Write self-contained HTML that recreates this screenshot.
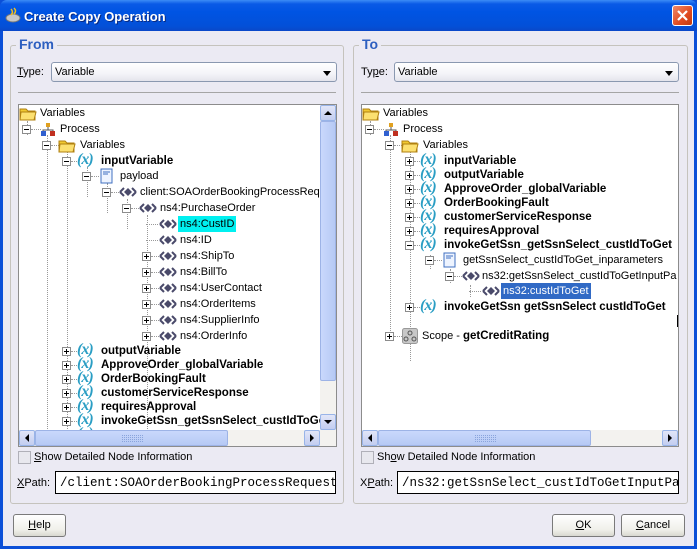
<!DOCTYPE html>
<html><head><meta charset="utf-8"><style>
*{margin:0;padding:0;box-sizing:border-box}
body{width:697px;height:549px;overflow:hidden;background:#0b4fd8;font-family:"Liberation Sans",sans-serif;font-size:11px;position:relative}
.a{position:absolute}
#title{left:0;top:0;width:697px;height:31px;background:linear-gradient(#3c8cf6 0,#0a5ae6 4px,#0054e3 12px,#0350d8 26px,#0a48c8 31px);border-radius:7px 7px 0 0}
#title span{position:absolute;left:24px;top:9px;color:#fff;font:bold 13px "Liberation Sans",sans-serif;text-shadow:1px 1px #0a2a80}
#close{left:672px;top:5px;width:21px;height:21px;background:linear-gradient(135deg,#f08a6a,#e04a20 60%,#c03a10);border:1px solid #fff;border-radius:3px}
#body{left:3px;top:31px;width:691px;height:515px;background:#ebeaf3}
.fs{border:1px solid #c5c3bd;border-radius:3px}
.lg{background:#ebeaf3;color:#2d5fc0;font-size:14px;font-weight:bold;padding:0 3px}
.combo{height:20px;border:1px solid #8a98b0;border-radius:3px;background:linear-gradient(#fff,#f4f4f8 60%,#e4e4ec);font-size:11px;padding:3px 0 0 3px}
.combo:after{content:"";position:absolute;right:5px;top:8px;border:4px solid transparent;border-top:5px solid #000;border-bottom:0}
.sep{height:1px;background:#a5a5a5}
.tree{background:#fff;border:1px solid #8c8c8c;overflow:hidden}
.clip{position:absolute;left:0;top:0;overflow:hidden;height:326px}
.r{position:absolute;height:16px;white-space:nowrap;font-size:11px;line-height:16px;color:#000}
.b{font-weight:bold;font-size:11.5px}
.ex{position:absolute;width:9px;height:9px;border:1px solid #8c8c8c;background:#fff;top:4px}
.ex:before{content:"";position:absolute;left:1px;top:3px;width:5px;height:1px;background:#000}
.p:after{content:"";position:absolute;left:3px;top:1px;width:1px;height:5px;background:#000}
.dl{position:absolute;top:8px;height:1px;border-top:1px dotted #999}
.vl{position:absolute;width:1px;border-left:1px dotted #999}
.x{position:absolute;color:#2a9ec4;font:italic bold 16px "Liberation Serif",serif;top:-2px;letter-spacing:-1px;line-height:18px}
.t{position:absolute}
.sb{background:#f3f2ef}
.btn{background:linear-gradient(#e2e6f8,#c2cdf0);border:1px solid #98b4e8;border-radius:2px}
.thumb{background:linear-gradient(90deg,#c9d8fc,#b6c9f4);border:1px solid #9db3e6;border-radius:2px}
.thumbh{background:linear-gradient(#c9d8fc,#b6c9f4);border:1px solid #9db3e6;border-radius:2px}
.chk{width:13px;height:13px;border:1px solid #b0b0b8;background:#e8e8ee}
.field{height:23px;border:1px solid #000;background:#fff;font:12.5px "Liberation Mono",monospace;padding:4px 0 0 4px;white-space:nowrap;overflow:hidden}
.pb{height:23px;border:1px solid #7a7a7a;border-radius:3px;background:linear-gradient(#fff,#f0f0ea 70%,#d8d8d0);text-align:center;line-height:21px;font-size:11px}
u{text-decoration:underline}
</style></head><body>
<div id="title" class="a"><svg class="a" style="left:5px;top:7px" width="16" height="16"><ellipse cx="8" cy="11" rx="7" ry="4" fill="#c8c8c8" stroke="#777"/><path d="M6 2 q3 3 0 6 M9 1 q3 3 0 6" stroke="#f0c020" fill="none" stroke-width="1.5"/></svg><span>Create Copy Operation</span></div>
<div id="close" class="a"><svg width="19" height="19"><path d="M5 5 L14 14 M14 5 L5 14" stroke="#fff" stroke-width="2.2"/></svg></div>
<div id="body" class="a"></div>

<!-- FROM -->
<div class="a fs" style="left:10px;top:45px;width:334px;height:459px"></div>
<div class="a lg" style="left:16px;top:36px">From</div>
<div class="a" style="left:17px;top:66px"><u>T</u>ype:</div>
<div class="a combo" style="left:51px;top:62px;width:286px">Variable</div>
<div class="a sep" style="left:18px;top:92px;width:318px"></div>
<div class="a tree" style="left:18px;top:104px;width:319px;height:343px">
 <div class="clip" style="width:302px">
  <div class="vl" style="left:8px;top:16px;height:14px"></div>
  <div class="vl" style="left:28px;top:30px;height:320px"></div>
  <div class="vl" style="left:48px;top:46px;height:290px"></div>
  <div class="vl" style="left:68px;top:62px;height:30px"></div>
  <div class="vl" style="left:88px;top:78px;height:30px"></div>
  <div class="vl" style="left:108px;top:94px;height:30px"></div>
  <div class="vl" style="left:128px;top:110px;height:226px"></div>
 </div>
</div>
<div class="a" style="left:18px;top:105px;width:302px;height:325px;overflow:hidden" id="lt">
 <svg class="a" style="left:1px;top:0" width="18" height="16"><path d="M1 4h6l2 2h7v9H1z" fill="#f0c830" stroke="#b08010"/><path d="M2 7h15l-2 8H1z" fill="#fce070" stroke="#b08010"/></svg>
 <div class="r" style="left:22px;top:0">Variables</div>

 <div class="r" style="left:4px;top:16px;width:200px"><span class="ex"></span><span class="dl" style="left:9px;width:10px"></span><svg class="a" style="left:18px;top:1px" width="16" height="15"><rect x="6" y="1" width="4" height="4" fill="#e0a020"/><rect x="1" y="9" width="5" height="5" fill="#3060d0"/><rect x="10" y="9" width="5" height="5" fill="#c03020"/><path d="M8 5v3M3 9V8h10v1" stroke="#555" fill="none"/></svg><span class="t" style="left:38px">Process</span></div>
 <div class="r" style="left:24px;top:32px;width:200px"><span class="ex"></span><span class="dl" style="left:9px;width:8px"></span><svg class="a" style="left:16px;top:0" width="18" height="16"><path d="M1 4h6l2 2h7v9H1z" fill="#f0c830" stroke="#b08010"/><path d="M2 7h15l-2 8H1z" fill="#fce070" stroke="#b08010"/></svg><span class="t" style="left:38px">Variables</span></div>
 <div class="r" style="left:44px;top:48px;width:260px"><span class="ex"></span><span class="dl" style="left:9px;width:8px"></span><span class="x" style="left:15px">(x)</span><span class="t b" style="left:39px">inputVariable</span></div>
 <div class="r" style="left:64px;top:63px;width:260px"><span class="ex"></span><span class="dl" style="left:9px;width:8px"></span><svg class="a" style="left:18px;top:0" width="14" height="16"><rect x="1" y="1" width="11" height="14" fill="#eef4ff" stroke="#4070c0"/><path d="M3 4h7M3 6h5" stroke="#4070c0"/></svg><span class="t" style="left:38px">payload</span></div>
 <div class="r" style="left:84px;top:79px;width:300px"><span class="ex"></span><span class="dl" style="left:9px;width:8px"></span><svg class="a" style="left:17px;top:2px" width="18" height="12"><path d="M1 6l4-4M1 6l4 4M17 6l-4-4M17 6l-4 4" stroke="#4a4a6a" stroke-width="2" fill="none"/><path d="M9 2l4 4-4 4-4-4z" fill="#4a4a6a"/></svg><span class="t" style="left:38px">client:SOAOrderBookingProcessRequest</span></div>
 <div class="r" style="left:104px;top:95px;width:300px"><span class="ex"></span><span class="dl" style="left:9px;width:8px"></span><svg class="a" style="left:17px;top:2px" width="18" height="12"><path d="M1 6l4-4M1 6l4 4M17 6l-4-4M17 6l-4 4" stroke="#4a4a6a" stroke-width="2" fill="none"/><path d="M9 2l4 4-4 4-4-4z" fill="#4a4a6a"/></svg><span class="t" style="left:38px">ns4:PurchaseOrder</span></div>
 <div class="r" style="left:124px;top:111px;width:200px"><span class="dl" style="left:4px;width:12px"></span><svg class="a" style="left:17px;top:2px" width="18" height="12"><path d="M1 6l4-4M1 6l4 4M17 6l-4-4M17 6l-4 4" stroke="#4a4a6a" stroke-width="2" fill="none"/><path d="M9 2l4 4-4 4-4-4z" fill="#4a4a6a"/></svg><span class="t" style="left:36px;background:#00f0f0;padding:0 2px">ns4:CustID</span></div>
 <div class="r" style="left:124px;top:127px;width:200px"><span class="dl" style="left:4px;width:12px"></span><svg class="a" style="left:17px;top:2px" width="18" height="12"><path d="M1 6l4-4M1 6l4 4M17 6l-4-4M17 6l-4 4" stroke="#4a4a6a" stroke-width="2" fill="none"/><path d="M9 2l4 4-4 4-4-4z" fill="#4a4a6a"/></svg><span class="t" style="left:38px">ns4:ID</span></div>
 <div class="r" style="left:124px;top:143px;width:200px"><span class="ex p"></span><span class="dl" style="left:9px;width:8px"></span><svg class="a" style="left:17px;top:2px" width="18" height="12"><path d="M1 6l4-4M1 6l4 4M17 6l-4-4M17 6l-4 4" stroke="#4a4a6a" stroke-width="2" fill="none"/><path d="M9 2l4 4-4 4-4-4z" fill="#4a4a6a"/></svg><span class="t" style="left:38px">ns4:ShipTo</span></div>
 <div class="r" style="left:124px;top:159px;width:200px"><span class="ex p"></span><span class="dl" style="left:9px;width:8px"></span><svg class="a" style="left:17px;top:2px" width="18" height="12"><path d="M1 6l4-4M1 6l4 4M17 6l-4-4M17 6l-4 4" stroke="#4a4a6a" stroke-width="2" fill="none"/><path d="M9 2l4 4-4 4-4-4z" fill="#4a4a6a"/></svg><span class="t" style="left:38px">ns4:BillTo</span></div>
 <div class="r" style="left:124px;top:175px;width:200px"><span class="ex p"></span><span class="dl" style="left:9px;width:8px"></span><svg class="a" style="left:17px;top:2px" width="18" height="12"><path d="M1 6l4-4M1 6l4 4M17 6l-4-4M17 6l-4 4" stroke="#4a4a6a" stroke-width="2" fill="none"/><path d="M9 2l4 4-4 4-4-4z" fill="#4a4a6a"/></svg><span class="t" style="left:38px">ns4:UserContact</span></div>
 <div class="r" style="left:124px;top:191px;width:200px"><span class="ex p"></span><span class="dl" style="left:9px;width:8px"></span><svg class="a" style="left:17px;top:2px" width="18" height="12"><path d="M1 6l4-4M1 6l4 4M17 6l-4-4M17 6l-4 4" stroke="#4a4a6a" stroke-width="2" fill="none"/><path d="M9 2l4 4-4 4-4-4z" fill="#4a4a6a"/></svg><span class="t" style="left:38px">ns4:OrderItems</span></div>
 <div class="r" style="left:124px;top:207px;width:200px"><span class="ex p"></span><span class="dl" style="left:9px;width:8px"></span><svg class="a" style="left:17px;top:2px" width="18" height="12"><path d="M1 6l4-4M1 6l4 4M17 6l-4-4M17 6l-4 4" stroke="#4a4a6a" stroke-width="2" fill="none"/><path d="M9 2l4 4-4 4-4-4z" fill="#4a4a6a"/></svg><span class="t" style="left:38px">ns4:SupplierInfo</span></div>
 <div class="r" style="left:124px;top:223px;width:200px"><span class="ex p"></span><span class="dl" style="left:9px;width:8px"></span><svg class="a" style="left:17px;top:2px" width="18" height="12"><path d="M1 6l4-4M1 6l4 4M17 6l-4-4M17 6l-4 4" stroke="#4a4a6a" stroke-width="2" fill="none"/><path d="M9 2l4 4-4 4-4-4z" fill="#4a4a6a"/></svg><span class="t" style="left:38px">ns4:OrderInfo</span></div>
 <div class="r" style="left:44px;top:238px;width:300px"><span class="ex p"></span><span class="dl" style="left:9px;width:8px"></span><span class="x" style="left:15px">(x)</span><span class="t b" style="left:39px">outputVariable</span></div>
 <div class="r" style="left:44px;top:252px;width:300px"><span class="ex p"></span><span class="dl" style="left:9px;width:8px"></span><span class="x" style="left:15px">(x)</span><span class="t b" style="left:39px">ApproveOrder_globalVariable</span></div>
 <div class="r" style="left:44px;top:266px;width:300px"><span class="ex p"></span><span class="dl" style="left:9px;width:8px"></span><span class="x" style="left:15px">(x)</span><span class="t b" style="left:39px">OrderBookingFault</span></div>
 <div class="r" style="left:44px;top:280px;width:300px"><span class="ex p"></span><span class="dl" style="left:9px;width:8px"></span><span class="x" style="left:15px">(x)</span><span class="t b" style="left:39px">customerServiceResponse</span></div>
 <div class="r" style="left:44px;top:294px;width:300px"><span class="ex p"></span><span class="dl" style="left:9px;width:8px"></span><span class="x" style="left:15px">(x)</span><span class="t b" style="left:39px">requiresApproval</span></div>
 <div class="r" style="left:44px;top:308px;width:300px"><span class="ex p"></span><span class="dl" style="left:9px;width:8px"></span><span class="x" style="left:15px">(x)</span><span class="t b" style="left:39px">invokeGetSsn_getSsnSelect_custIdToGet</span></div>
 <div class="r" style="left:44px;top:322px;width:300px"><span class="x" style="left:15px">(x)</span></div>
</div>
<!-- left scrollbars -->
<div class="a sb" style="left:320px;top:105px;width:16px;height:325px"></div>
<div class="a btn" style="left:320px;top:105px;width:16px;height:16px"><svg width="14" height="14"><path d="M3 9h8L7 5z" fill="#000"/></svg></div>
<div class="a thumb" style="left:320px;top:121px;width:16px;height:260px"></div>
<div class="a btn" style="left:320px;top:414px;width:16px;height:16px"><svg width="14" height="14"><path d="M3 5h8L7 9z" fill="#000"/></svg></div>
<div class="a sb" style="left:19px;top:430px;width:317px;height:16px"></div>
<div class="a btn" style="left:19px;top:430px;width:16px;height:16px"><svg width="14" height="14"><path d="M9 3v8L5 7z" fill="#000"/></svg></div>
<div class="a thumbh" style="left:35px;top:430px;width:193px;height:16px"><svg class="a" style="left:86px;top:4px" width="22" height="8"><pattern id="d" width="2" height="2" patternUnits="userSpaceOnUse"><rect width="1" height="1" fill="#8aa4dc"/></pattern><rect width="22" height="8" fill="url(#d)"/></svg></div>
<div class="a btn" style="left:304px;top:430px;width:16px;height:16px"><svg width="14" height="14"><path d="M5 3v8L9 7z" fill="#000"/></svg></div>
<div class="a chk" style="left:18px;top:451px"></div>
<div class="a" style="left:34px;top:451px"><u>S</u>how Detailed Node Information</div>
<div class="a" style="left:17px;top:477px"><u>X</u>Path:</div>
<div class="a field" style="left:55px;top:471px;width:281px">/client:SOAOrderBookingProcessRequest/ns4</div>

<!-- TO -->
<div class="a fs" style="left:353px;top:45px;width:335px;height:459px"></div>
<div class="a lg" style="left:359px;top:36px">To</div>
<div class="a" style="left:361px;top:66px">Ty<u>p</u>e:</div>
<div class="a combo" style="left:394px;top:62px;width:285px">Variable</div>
<div class="a sep" style="left:361px;top:92px;width:318px"></div>
<div class="a tree" style="left:361px;top:104px;width:318px;height:343px">
 <div class="vl" style="left:8px;top:16px;height:14px"></div>
 <div class="vl" style="left:28px;top:30px;height:200px"></div>
 <div class="vl" style="left:48px;top:46px;height:210px"></div>
 <div class="vl" style="left:68px;top:150px;height:14px"></div>
 <div class="vl" style="left:88px;top:164px;height:14px"></div>
 <div class="vl" style="left:108px;top:180px;height:12px"></div>
 <div class="a" style="left:315px;top:210px;width:2px;height:12px;background:#000"></div>
</div>
<div class="a" style="left:361px;top:105px;width:316px;height:325px;overflow:hidden">
 <svg class="a" style="left:1px;top:0" width="18" height="16"><path d="M1 4h6l2 2h7v9H1z" fill="#f0c830" stroke="#b08010"/><path d="M2 7h15l-2 8H1z" fill="#fce070" stroke="#b08010"/></svg>
 <div class="r" style="left:22px;top:0">Variables</div>
 <div class="r" style="left:4px;top:16px;width:200px"><span class="ex"></span><span class="dl" style="left:9px;width:10px"></span><svg class="a" style="left:18px;top:1px" width="16" height="15"><rect x="6" y="1" width="4" height="4" fill="#e0a020"/><rect x="1" y="9" width="5" height="5" fill="#3060d0"/><rect x="10" y="9" width="5" height="5" fill="#c03020"/><path d="M8 5v3M3 9V8h10v1" stroke="#555" fill="none"/></svg><span class="t" style="left:38px">Process</span></div>
 <div class="r" style="left:24px;top:32px;width:200px"><span class="ex"></span><span class="dl" style="left:9px;width:8px"></span><svg class="a" style="left:16px;top:0" width="18" height="16"><path d="M1 4h6l2 2h7v9H1z" fill="#f0c830" stroke="#b08010"/><path d="M2 7h15l-2 8H1z" fill="#fce070" stroke="#b08010"/></svg><span class="t" style="left:38px">Variables</span></div>
 <div class="r" style="left:44px;top:48px;width:300px"><span class="ex p"></span><span class="dl" style="left:9px;width:8px"></span><span class="x" style="left:15px">(x)</span><span class="t b" style="left:39px">inputVariable</span></div>
 <div class="r" style="left:44px;top:62px;width:300px"><span class="ex p"></span><span class="dl" style="left:9px;width:8px"></span><span class="x" style="left:15px">(x)</span><span class="t b" style="left:39px">outputVariable</span></div>
 <div class="r" style="left:44px;top:76px;width:300px"><span class="ex p"></span><span class="dl" style="left:9px;width:8px"></span><span class="x" style="left:15px">(x)</span><span class="t b" style="left:39px">ApproveOrder_globalVariable</span></div>
 <div class="r" style="left:44px;top:90px;width:300px"><span class="ex p"></span><span class="dl" style="left:9px;width:8px"></span><span class="x" style="left:15px">(x)</span><span class="t b" style="left:39px">OrderBookingFault</span></div>
 <div class="r" style="left:44px;top:104px;width:300px"><span class="ex p"></span><span class="dl" style="left:9px;width:8px"></span><span class="x" style="left:15px">(x)</span><span class="t b" style="left:39px">customerServiceResponse</span></div>
 <div class="r" style="left:44px;top:118px;width:300px"><span class="ex p"></span><span class="dl" style="left:9px;width:8px"></span><span class="x" style="left:15px">(x)</span><span class="t b" style="left:39px">requiresApproval</span></div>
 <div class="r" style="left:44px;top:132px;width:300px"><span class="ex"></span><span class="dl" style="left:9px;width:8px"></span><span class="x" style="left:15px">(x)</span><span class="t b" style="left:39px">invokeGetSsn_getSsnSelect_custIdToGet</span></div>
 <div class="r" style="left:64px;top:147px;width:300px"><span class="ex"></span><span class="dl" style="left:9px;width:8px"></span><svg class="a" style="left:18px;top:0" width="14" height="16"><rect x="1" y="1" width="11" height="14" fill="#eef4ff" stroke="#4070c0"/><path d="M3 4h7M3 6h5" stroke="#4070c0"/></svg><span class="t" style="left:38px">getSsnSelect_custIdToGet_inparameters</span></div>
 <div class="r" style="left:84px;top:163px;width:300px"><span class="ex"></span><span class="dl" style="left:9px;width:8px"></span><svg class="a" style="left:17px;top:2px" width="18" height="12"><path d="M1 6l4-4M1 6l4 4M17 6l-4-4M17 6l-4 4" stroke="#4a4a6a" stroke-width="2" fill="none"/><path d="M9 2l4 4-4 4-4-4z" fill="#4a4a6a"/></svg><span class="t" style="left:37px">ns32:getSsnSelect_custIdToGetInputParameters</span></div>
 <div class="r" style="left:104px;top:178px;width:200px"><span class="dl" style="left:4px;width:12px"></span><svg class="a" style="left:17px;top:2px" width="18" height="12"><path d="M1 6l4-4M1 6l4 4M17 6l-4-4M17 6l-4 4" stroke="#4a4a6a" stroke-width="2" fill="none"/><path d="M9 2l4 4-4 4-4-4z" fill="#4a4a6a"/></svg><span class="t" style="left:36px;background:#316ac5;color:#fff;padding:0 2px">ns32:custIdToGet</span></div>
 <div class="r" style="left:44px;top:194px;width:300px"><span class="ex p"></span><span class="dl" style="left:9px;width:8px"></span><span class="x" style="left:15px">(x)</span><span class="t b" style="left:39px">invokeGetSsn getSsnSelect custIdToGet</span></div>
 <div class="r" style="left:24px;top:223px;width:300px"><span class="ex p"></span><span class="dl" style="left:9px;width:8px"></span><svg class="a" style="left:17px;top:0" width="16" height="16"><rect x="0.5" y="0.5" width="15" height="15" rx="2" fill="#c8c8c8" stroke="#999"/><circle cx="8" cy="5" r="2" fill="none" stroke="#555"/><circle cx="4" cy="11" r="2" fill="none" stroke="#555"/><circle cx="12" cy="11" r="2" fill="none" stroke="#555"/></svg><span class="t" style="left:37px">Scope - <b class="b">getCreditRating</b></span></div>
</div>
<div class="a sb" style="left:362px;top:430px;width:316px;height:16px"></div>
<div class="a btn" style="left:362px;top:430px;width:16px;height:16px"><svg width="14" height="14"><path d="M9 3v8L5 7z" fill="#000"/></svg></div>
<div class="a thumbh" style="left:378px;top:430px;width:213px;height:16px"><svg class="a" style="left:96px;top:4px" width="22" height="8"><rect width="22" height="8" fill="url(#d)"/></svg></div>
<div class="a btn" style="left:662px;top:430px;width:16px;height:16px"><svg width="14" height="14"><path d="M5 3v8L9 7z" fill="#000"/></svg></div>
<div class="a chk" style="left:361px;top:451px"></div>
<div class="a" style="left:377px;top:451px">Sh<u>o</u>w Detailed Node Information</div>
<div class="a" style="left:360px;top:477px">X<u>P</u>ath:</div>
<div class="a field" style="left:397px;top:471px;width:282px">/ns32:getSsnSelect_custIdToGetInputParam</div>

<div class="a pb" style="left:13px;top:514px;width:53px"><u>H</u>elp</div>
<div class="a pb" style="left:552px;top:514px;width:63px"><u>O</u>K</div>
<div class="a pb" style="left:621px;top:514px;width:64px"><u>C</u>ancel</div>
</body></html>
